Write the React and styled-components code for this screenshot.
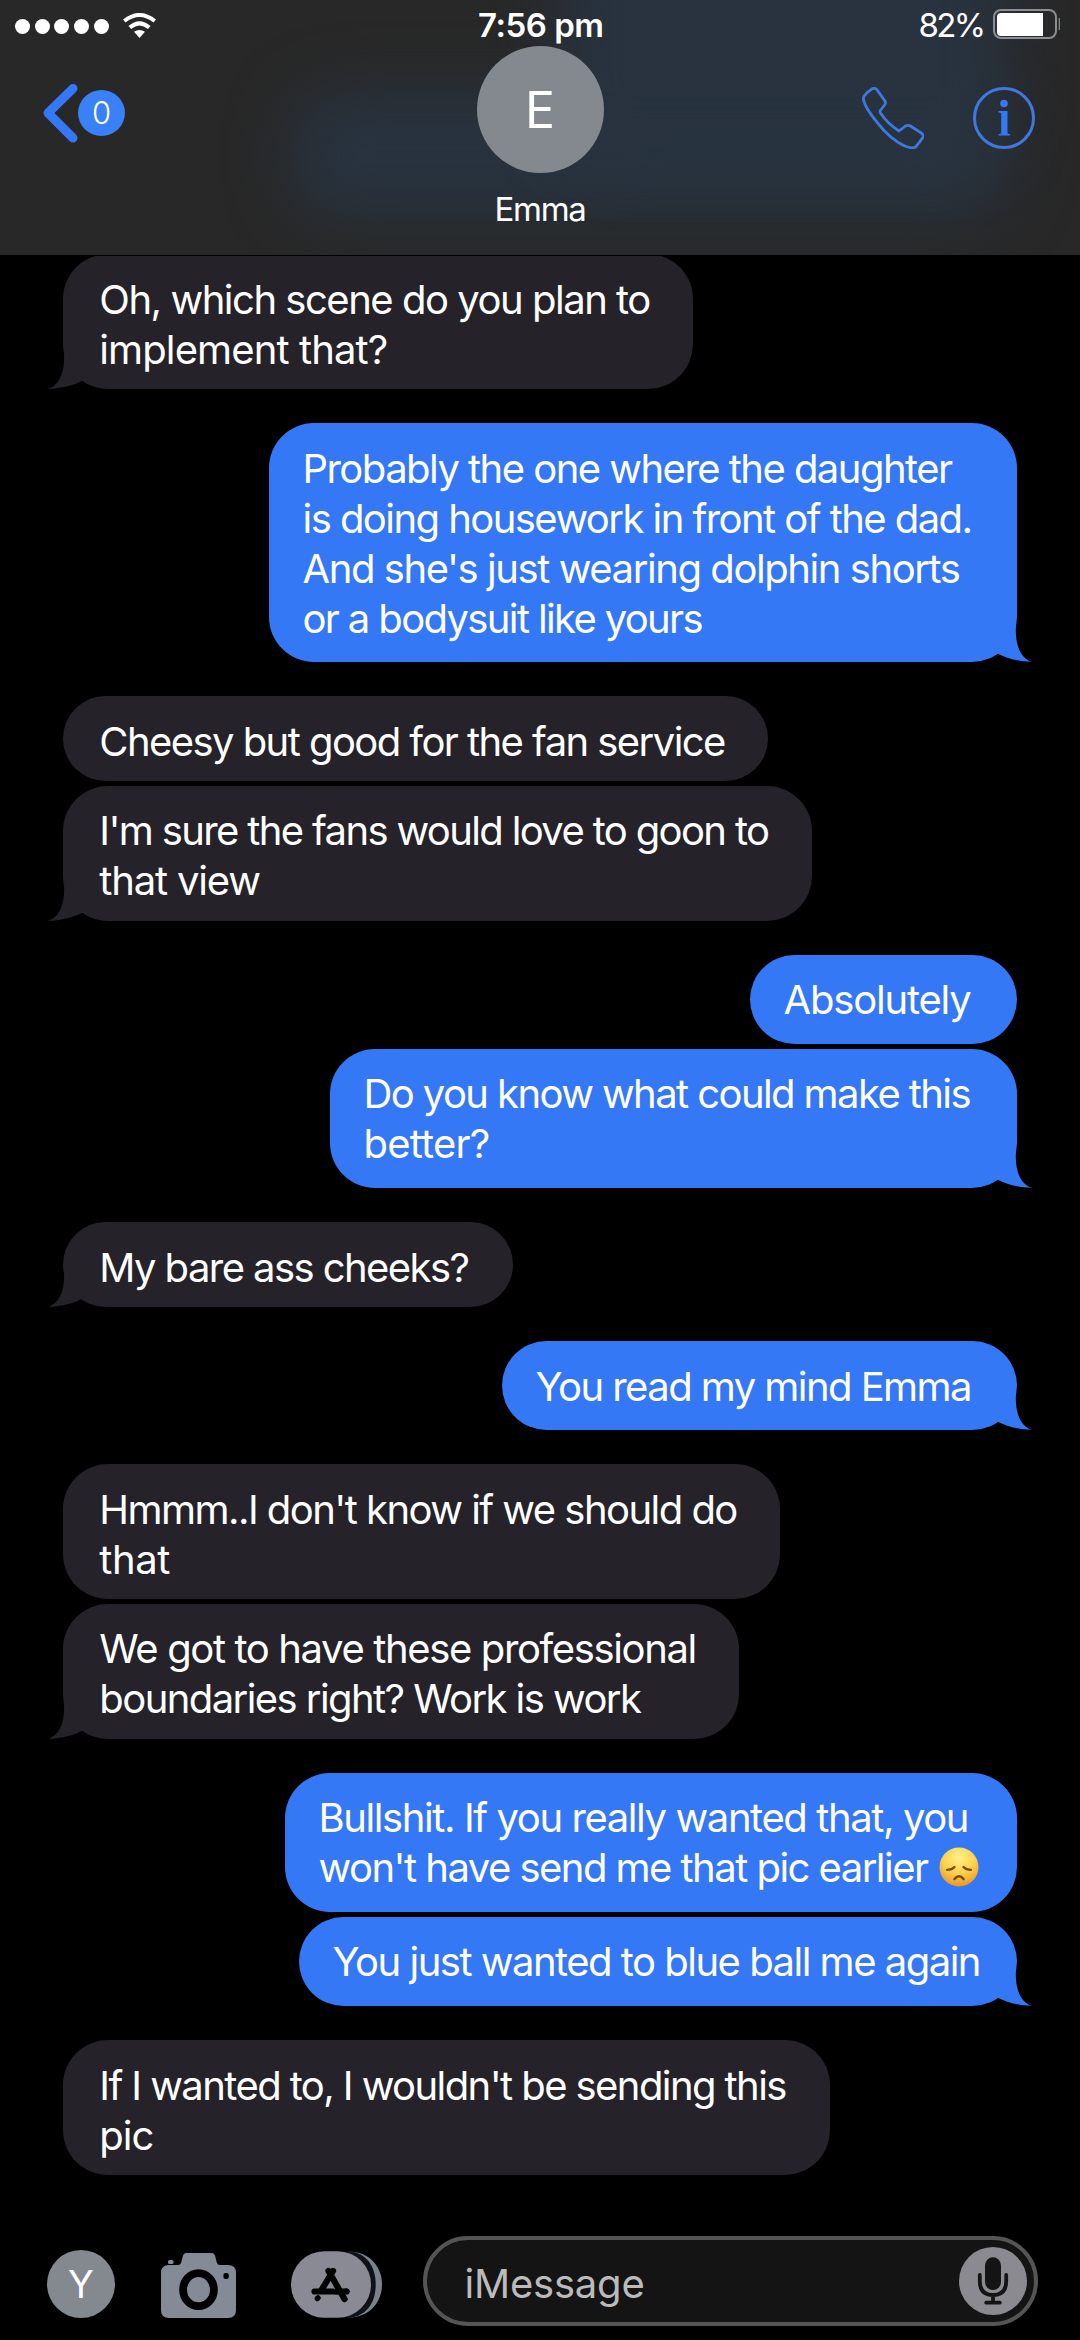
import React, { useLayoutEffect, useRef, useState } from "react";
import styled, { createGlobalStyle } from "styled-components";

const GlobalStyle = createGlobalStyle`
  * { box-sizing: border-box; }
  html, body { margin: 0; background: #000; }
  svg { display: block; flex: none; }
`;

const Screen = styled.div`
  display: flex;
  flex-direction: column;
  width: 1080px;
  height: 2340px;
  overflow: hidden;
  background: #000;
  color: #fff;
  font-family: Inter, "Liberation Sans", sans-serif;
  font-size: 40px;
  line-height: 50px;
`;

/* ---------- text that is tracked to a given advance width ---------- */

const Tracked = styled.span`
  display: inline-block;
  white-space: pre;
  font-kerning: normal;
`;

function Fit({ text, width }) {
  const ref = useRef(null);
  const [spacing, setSpacing] = useState(0);
  useLayoutEffect(() => {
    const el = ref.current;
    const previous = el.style.letterSpacing;
    el.style.letterSpacing = "0px";
    const natural = el.getBoundingClientRect().width;
    el.style.letterSpacing = previous;
    setSpacing((width - natural) / text.length);
  }, [text, width]);
  return (
    <Tracked ref={ref} style={{ letterSpacing: `${spacing}px` }}>
      {text}
    </Tracked>
  );
}

/* ---------- header ---------- */

const Header = styled.header`
  position: relative;
  z-index: 1;
  flex: none;
  height: 256px;
  overflow: hidden;
  background: #282828;
  border-bottom: 1px solid #000;
`;

const Glow = styled.div`
  position: absolute;
  left: ${(p) => p.$x}px;
  top: ${(p) => p.$y}px;
  width: ${(p) => p.$w}px;
  height: ${(p) => p.$h}px;
  border-radius: 50px;
  background: #28333f;
  filter: blur(30px);
`;

const StatusBar = styled.div`
  position: relative;
  display: grid;
  grid-template-columns: 1fr auto 1fr;
  height: 46px;
  font-size: 33px;
  line-height: 40px;
`;

const Signal = styled.div`
  display: flex;
  align-items: center;
  gap: 4.7px;
  padding: 6px 0 0 15px;
`;

const Dot = styled.span`
  width: 15px;
  height: 15px;
  border-radius: 50%;
  background: #fff;
`;

const Wifi = styled.svg`
  margin-left: 10px;
`;

const Time = styled.div`
  padding: 5px 0 0 1.5px;
  font-weight: 600;
`;

const Power = styled.div`
  display: flex;
  justify-content: flex-end;
  padding: 5px 20px 0 0;
  gap: 9.5px;
`;

const Battery = styled.svg`
  margin-top: 4px;
`;

const Nav = styled.div`
  position: relative;
  display: grid;
  grid-template-columns: 1fr auto 1fr;
`;

const Back = styled.div`
  display: flex;
  align-items: center;
  height: 60px;
  margin: 37px 0 0 42px;
`;

const Badge = styled.span`
  display: flex;
  align-items: center;
  justify-content: center;
  width: 47px;
  height: 46px;
  border-radius: 50%;
  background: #3a80f6;
  font-size: 31px;
  font-weight: 300;
`;

const Contact = styled.div`
  display: flex;
  flex-direction: column;
  align-items: center;
  gap: 16px;
  font-size: 33px;
  line-height: 40px;
`;

const Avatar = styled.div`
  display: flex;
  align-items: center;
  justify-content: center;
  width: 127px;
  height: 127px;
  border-radius: 50%;
  background: #84888f;
  font-size: 50px;
`;

const Actions = styled.div`
  display: flex;
  justify-content: flex-end;
  gap: 49px;
  padding: 41px 45px 0 0;
`;

/* ---------- conversation ---------- */

const Thread = styled.main`
  flex: 1;
  display: flex;
  flex-direction: column;
  gap: 34.3px;
  margin-top: -1.8px;
  padding: 0 63px;
`;

const Group = styled.section`
  display: flex;
  flex-direction: column;
  align-items: ${(p) => (p.$sent ? "flex-end" : "flex-start")};
  gap: 5px;
`;

const Bubble = styled.div`
  position: relative;
  display: flex;
  flex-direction: column;
  align-items: flex-start;
  width: ${(p) => p.$w}px;
  padding: ${(p) => (p.$sent ? "20.5px 0 18.5px 33.5px" : "20.5px 0 14.1px 36.3px")};
  border-radius: 45px;
  background: ${(p) => (p.$sent ? "#3478f6" : "#25222a")};
`;

const Line = styled.div`
  display: flex;
  height: 50px;
`;

const Tail = styled.svg`
  position: absolute;
  bottom: 0;
  ${(p) => (p.$sent ? "right: -16px; transform: scaleX(-1);" : "left: -16px;")}
  fill: ${(p) => (p.$sent ? "#3478f6" : "#25222a")};
`;

const Emoji = styled.svg`
  margin: 4px 0 0 11.5px;
`;

const GROUPS = [
  {
    bubbles: [{ w: 630, lines: [["Oh, which scene do you plan to", 550.5], ["implement that?", 288]] }],
  },
  {
    sent: true,
    bubbles: [
      {
        w: 748,
        lines: [
          ["Probably the one where the daughter", 649],
          ["is doing housework in front of the dad.", 669],
          ["And she's just wearing dolphin shorts", 657],
          ["or a bodysuit like yours", 399.5],
        ],
      },
    ],
  },
  {
    bubbles: [
      { w: 705, lines: [["Cheesy but good for the fan service", 625.5]] },
      { w: 749, lines: [["I'm sure the fans would love to goon to", 669], ["that view", 160.5]] },
    ],
  },
  {
    sent: true,
    bubbles: [
      { w: 267, lines: [["Absolutely", 187]] },
      { w: 687, lines: [["Do you know what could make this", 606.5], ["better?", 126]] },
    ],
  },
  { bubbles: [{ w: 450, lines: [["My bare ass cheeks?", 369]] }] },
  { sent: true, bubbles: [{ w: 515, lines: [["You read my mind Emma", 435.5]] }] },
  {
    bubbles: [
      { w: 717, lines: [["Hmmm..I don't know if we should do", 637.5], ["that", 70.5]] },
      { w: 676, lines: [["We got to have these professional", 596.5], ["boundaries right? Work is work", 541]] },
    ],
  },
  {
    sent: true,
    bubbles: [
      {
        w: 732,
        lines: [
          ["Bullshit. If you really wanted that, you", 649.5],
          ["won't have send me that pic earlier", 609, "sad"],
        ],
      },
      { w: 718, lines: [["You just wanted to blue ball me again", 647.5]] },
    ],
  },
  {
    open: true,
    bubbles: [{ w: 767, lines: [["If I wanted to, I wouldn't be sending this", 686.5], ["pic", 54]] }],
  },
];

function SadFace() {
  return (
    <Emoji width="40" height="40" viewBox="0 0 40 40" role="img" aria-label="😞">
      <defs>
        <radialGradient id="face" cx="0.5" cy="0.25" r="0.75">
          <stop offset="0" stopColor="#fff08a" />
          <stop offset="0.55" stopColor="#fcd24c" />
          <stop offset="1" stopColor="#e8962a" />
        </radialGradient>
      </defs>
      <circle cx="20" cy="20" r="19.5" fill="url(#face)" />
      <g fill="none" stroke="#7a4a10" strokeWidth="2.3" strokeLinecap="round">
        <path d="M8 22.8Q13 22.8 15.5 20" />
        <path d="M24.5 20Q27 22.8 32 22.8" />
        <path d="M15.5 32Q20 26.5 24.5 32" strokeWidth="2.6" />
      </g>
    </Emoji>
  );
}

function Message({ bubble, sent, tail }) {
  return (
    <Bubble $w={bubble.w} $sent={sent}>
      {tail && (
        <Tail $sent={sent} width="50" height="50" viewBox="0 0 50 50">
          <path d="M17.2 0V18C17.2 36 11 47 1 49.8C14 50 27 46 36 41.5L50 30V0Z" />
        </Tail>
      )}
      {bubble.lines.map(([text, width, emoji]) => (
        <Line key={text}>
          <Fit text={text} width={width} />
          {emoji && <SadFace />}
        </Line>
      ))}
    </Bubble>
  );
}

/* ---------- composer ---------- */

const Composer = styled.footer`
  flex: none;
  display: flex;
  align-items: center;
  height: 104px;
  padding: 0 42px 14px 47px;
`;

const Profile = styled.div`
  display: flex;
  align-items: center;
  justify-content: center;
  width: 68px;
  height: 68px;
  margin-top: 6px;
  border-radius: 50%;
  background: #84888f;
  font-size: 38px;
`;

const CameraIcon = styled.svg`
  margin: 8px 0 0 46px;
`;

const AppsIcon = styled.svg`
  margin: 6px 41px 0 55px;
`;

const Field = styled.div`
  flex: 1;
  display: flex;
  align-items: center;
  justify-content: space-between;
  height: 90px;
  padding: 0 7px 0 37.5px;
  border: 4px solid #555;
  border-radius: 45px;
  background: #141414;
  color: #bbb;
`;

const Placeholder = styled.div`
  padding-top: 4px;
  height: 53px;
`;

export default function App() {
  return (
    <Screen>
      <GlobalStyle />
      <Header>
        <Glow $x={290} $y={92} $w={720} $h={126} />
        <Glow $x={560} $y={-80} $w={445} $h={240} />
        <StatusBar>
          <Signal>
            <Dot />
            <Dot />
            <Dot />
            <Dot />
            <Dot />
            <Wifi width="33" height="26" viewBox="0 0 33 26">
              <g fill="none" stroke="#fff" strokeWidth="4">
                <path d="M1.3 8Q16.5 -4 31.7 8" />
                <path d="M6.8 14.6Q16.5 6 26.2 14.6" />
              </g>
              <path d="M11 18.8Q16.5 15 22 18.8L16.5 25Z" fill="#fff" />
            </Wifi>
          </Signal>
          <Time>
            <Fit text="7:56 pm" width={125.5} />
          </Time>
          <Power>
            <Fit text="82%" width={65} />
            <Battery width="67" height="30" viewBox="0 0 67 30">
              <rect x="1" y="1" width="62" height="28" rx="7" fill="none" stroke="#8b8e92" strokeWidth="2" />
              <path d="M8 4H50V27H8Q4 27 4 23V8Q4 4 8 4Z" fill="#fff" />
              <path d="M66.3 9V21" stroke="#8b8e92" strokeWidth="1.2" />
            </Battery>
          </Power>
        </StatusBar>
        <Nav>
          <Back>
            <svg width="36" height="60" viewBox="0 0 36 60">
              <path
                d="M31 5.5L6 30L31 55"
                fill="none"
                stroke="#3478f6"
                strokeWidth="9"
                strokeLinecap="round"
                strokeLinejoin="round"
              />
            </svg>
            <Badge>0</Badge>
          </Back>
          <Contact>
            <Avatar>E</Avatar>
            <Fit text="Emma" width={91} />
          </Contact>
          <Actions>
            <svg width="62" height="62" viewBox="0 0 62 62">
              <path
                d="M8.6 2.8Q12 0 15 2.8L23 14Q24 16 22.6 18L18.3 23.5Q17.8 25 18.8 26.5Q26 37 37 44L43.5 39Q46 37.8 48.5 39L60 46.5Q62 48.2 60.8 50.5Q57.5 55.5 54 59.5Q52.5 61.2 49 60.8Q37 59 22 43.5Q3 22 1.5 12.5Q1.2 10.5 2.2 9Q5 5.2 8.6 2.8Z"
                fill="none"
                stroke="#3f78e0"
                strokeWidth="2.8"
                strokeLinejoin="round"
              />
            </svg>
            <svg width="62" height="62" viewBox="0 0 62 62">
              <circle cx="31" cy="31" r="29.5" fill="none" stroke="#3f78e0" strokeWidth="3" />
              <circle cx="31" cy="16.5" r="3.8" fill="#3478f6" />
              <path d="M25.5 24H34.5V46.5L37 47.2V48.6H25.5V47.2L28.2 46.5V26L25.5 25.4Z" fill="#3478f6" />
            </svg>
          </Actions>
        </Nav>
      </Header>

      <Thread>
        {GROUPS.map((group, g) => (
          <Group key={g} $sent={group.sent}>
            {group.bubbles.map((bubble, b) => (
              <Message
                key={b}
                bubble={bubble}
                sent={group.sent}
                tail={!group.open && b === group.bubbles.length - 1}
              />
            ))}
          </Group>
        ))}
      </Thread>

      <Composer>
        <Profile>Y</Profile>
        <CameraIcon width="75" height="65" viewBox="0 0 75 65">
          <path
            d="M8 12H17Q19.5 12 20.2 9.5L22 2.5Q22.7 0 25 0H51Q53.2 0 54 2.5L55.8 9.5Q56.5 12 59 12H67Q75 12 75 20V57Q75 65 67 65H8Q0 65 0 57V20Q0 12 8 12Z"
            fill="#848b96"
          />
          <rect x="7" y="7" width="5.5" height="4" rx="1.5" fill="#848b96" />
          <ellipse cx="37.5" cy="36.7" rx="15.4" ry="16.5" fill="none" stroke="#000" strokeWidth="7.8" />
          <rect x="62.4" y="20" width="5.4" height="6" rx="2" fill="#000" />
        </CameraIcon>
        <AppsIcon width="91" height="67" viewBox="0 0 91 67">
          <path d="M58 0.5C80 1 91 17 91 33.5S80 66 58 66.5Z" fill="#7a838b" />
          <path d="M56 0C76 1 84.7 16 84.7 33.5S76 66 56 67Z" fill="#0f1317" />
          <rect x="0" y="0.3" width="80" height="66.4" rx="33.2" fill="#898a94" />
          <g stroke="#000" strokeWidth="6.2" strokeLinecap="round">
            <path d="M23.5 40.5H55.5" />
            <path d="M42 20L30.5 39" />
            <path d="M26.3 47.5L27 46.8" strokeWidth="5.4" />
            <path d="M43 28.5L58 53" stroke="#898a94" strokeWidth="9" strokeLinecap="butt" />
            <path d="M46 40.5H55.5" />
            <path d="M37.5 20L53.5 48" />
          </g>
        </AppsIcon>
        <Field>
          <Placeholder>
            <Fit text="iMessage" width={180} />
          </Placeholder>
          <svg width="68" height="68" viewBox="0 0 68 68">
            <circle cx="34" cy="34" r="34" fill="#8b8a90" />
            <rect x="26" y="10.3" width="16" height="32.7" rx="8" fill="#141414" />
            <path
              d="M20.8 28V34Q20.8 48 34 48T47.2 34V28M34 48V55M27.2 55.7H40.8"
              fill="none"
              stroke="#141414"
              strokeWidth="3.8"
              strokeLinecap="round"
            />
          </svg>
        </Field>
      </Composer>
    </Screen>
  );
}
